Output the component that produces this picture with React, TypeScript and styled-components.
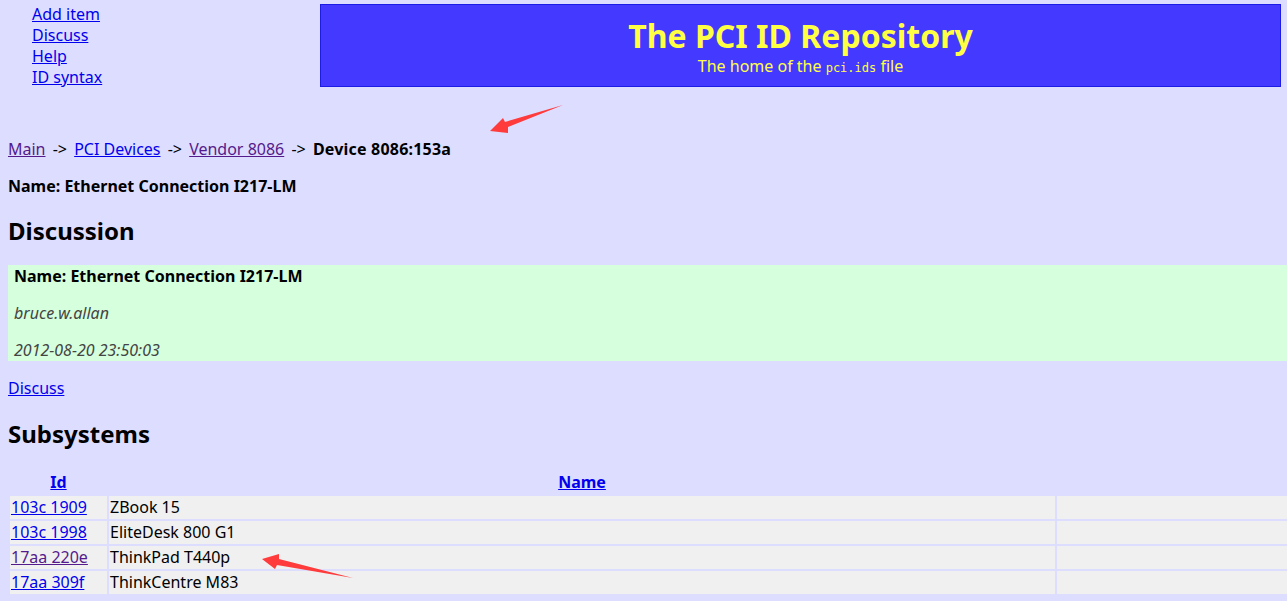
import React from "react";
import styled, { createGlobalStyle } from "styled-components";

const Global = createGlobalStyle`
  html, body { margin: 0; padding: 0; background: #ddddff; }
  body {
    font-family: "Noto Sans", "Open Sans", sans-serif;
    font-size: 16px;
    line-height: 21px;
    color: #000;
    overflow: hidden;
  }
`;

const Page = styled.div`
  position: relative;
  width: 1287px;
  min-height: 601px;
`;

const TopBar = styled.div`
  display: flex;
  align-items: flex-start;
  padding-top: 4px;
`;

const NavList = styled.ul`
  list-style: none;
  margin: 0;
  padding: 0 0 0 32px;
  width: 288px;
  flex: none;
`;

const NavItem = styled.li`
  line-height: 21px;
  height: 21px;
`;

const Link = styled.a<{ $visited?: boolean; $bold?: boolean }>`
  color: ${(p) => (p.$visited ? "#551a8b" : "#0000ee")};
  text-decoration: underline;
  font-weight: ${(p) => (p.$bold ? 700 : 400)};
  cursor: pointer;
`;

const Banner = styled.div`
  flex: 1;
  margin-right: 6px;
  background: #4439ff;
  border: 1px solid #1c1ce6;
  padding: 11px 0 7px;
  text-align: center;
  color: #ffff44;
`;

const Title = styled.h1`
  margin: 0;
  font-size: 32px;
  line-height: 40px;
  font-weight: 700;
`;

const Subtitle = styled.div`
  font-size: 16px;
  line-height: 21px;
`;

const Code = styled.code`
  font-family: "DejaVu Sans Mono", "Liberation Mono", monospace;
  font-size: 12px;
`;

const Main = styled.div`
  padding-left: 8px;
  padding-top: 51px;
`;

const Para = styled.p<{ $bold?: boolean }>`
  margin: 0 0 16px;
  font-weight: ${(p) => (p.$bold ? 700 : 400)};
`;

const Sep = styled.span`
  margin: 0 3px;
  white-space: pre;
`;

const Crumb = styled.span`
  font-weight: 700;
  letter-spacing: 0.2px;
`;

const Heading = styled.h2<{ $top: number; $bottom: number }>`
  margin: ${(p) => p.$top}px 0 ${(p) => p.$bottom}px;
  font-size: 24px;
  line-height: 30px;
  font-weight: 700;
`;

const DiscussionBox = styled.div`
  background: #d5ffdd;
  padding: 1px 6px 0;
  margin-bottom: 17px;
`;

const BoxLine = styled.p<{ $italic?: boolean }>`
  margin: 0 0 16px;
  font-weight: ${(p) => (p.$italic ? 400 : 700)};
  font-style: ${(p) => (p.$italic ? "italic" : "normal")};
  color: ${(p) => (p.$italic ? "#444444" : "#000")};
  &:last-child { margin-bottom: 0; }
`;

const Table = styled.table`
  width: 1283px;
  border-spacing: 2px;
  table-layout: fixed;
  margin-left: 0;
`;

const HeadCell = styled.th`
  height: 23px;
  padding: 0;
  text-align: center;
  font-weight: 700;
`;

const Cell = styled.td`
  height: 23px;
  padding: 0 1px;
  background: #f0f0f0;
  white-space: nowrap;
  vertical-align: middle;
`;

const Overlay = styled.svg`
  position: absolute;
  left: 0;
  top: 0;
  pointer-events: none;
`;

const rows = [
  { id: "103c 1909", name: "ZBook 15", visited: false },
  { id: "103c 1998", name: "EliteDesk 800 G1", visited: false },
  { id: "17aa 220e", name: "ThinkPad T440p", visited: true },
  { id: "17aa 309f", name: "ThinkCentre M83", visited: false },
];

export default function App() {
  return (
    <Page>
      <Global />
      <TopBar>
        <NavList>
          <NavItem><Link>Add item</Link></NavItem>
          <NavItem><Link>Discuss</Link></NavItem>
          <NavItem><Link>Help</Link></NavItem>
          <NavItem><Link>ID syntax</Link></NavItem>
        </NavList>
        <Banner>
          <Title>The PCI ID Repository</Title>
          <Subtitle>
            The home of the <Code>pci.ids</Code> file
          </Subtitle>
        </Banner>
      </TopBar>
      <Main>
        <Para>
          <Link $visited>Main</Link>
          <Sep>{" -> "}</Sep>
          <Link>PCI Devices</Link>
          <Sep>{" -> "}</Sep>
          <Link $visited>Vendor 8086</Link>
          <Sep>{" -> "}</Sep>
          <Crumb>Device 8086:153a</Crumb>
        </Para>
        <Para $bold>Name: Ethernet Connection I217-LM</Para>
        <Heading $top={19} $bottom={19}>Discussion</Heading>
        <DiscussionBox>
          <BoxLine>Name: Ethernet Connection I217-LM</BoxLine>
          <BoxLine $italic>bruce.w.allan</BoxLine>
          <BoxLine $italic>2012-08-20 23:50:03</BoxLine>
        </DiscussionBox>
        <Para>
          <Link>Discuss</Link>
        </Para>
        <Heading $top={20} $bottom={20}>Subsystems</Heading>
        <Table>
          <colgroup>
            <col style={{ width: 97 }} />
            <col style={{ width: 946 }} />
            <col />
          </colgroup>
          <thead>
            <tr>
              <HeadCell><Link $bold>Id</Link></HeadCell>
              <HeadCell><Link $bold>Name</Link></HeadCell>
              <HeadCell />
            </tr>
          </thead>
          <tbody>
            {rows.map((r) => (
              <tr key={r.id}>
                <Cell><Link $visited={r.visited}>{r.id}</Link></Cell>
                <Cell>{r.name}</Cell>
                <Cell />
              </tr>
            ))}
          </tbody>
        </Table>
      </Main>
      <Overlay width="1287" height="601" viewBox="0 0 1287 601">
        <polygon
          points="490,131 503,118 505,122 563,105 508,127 508,133"
          fill="#ff3b3b"
        />
        <polygon
          points="262,559 279,554 279,559 353,578 277,565 275,569"
          fill="#ff3b3b"
        />
      </Overlay>
    </Page>
  );
}
